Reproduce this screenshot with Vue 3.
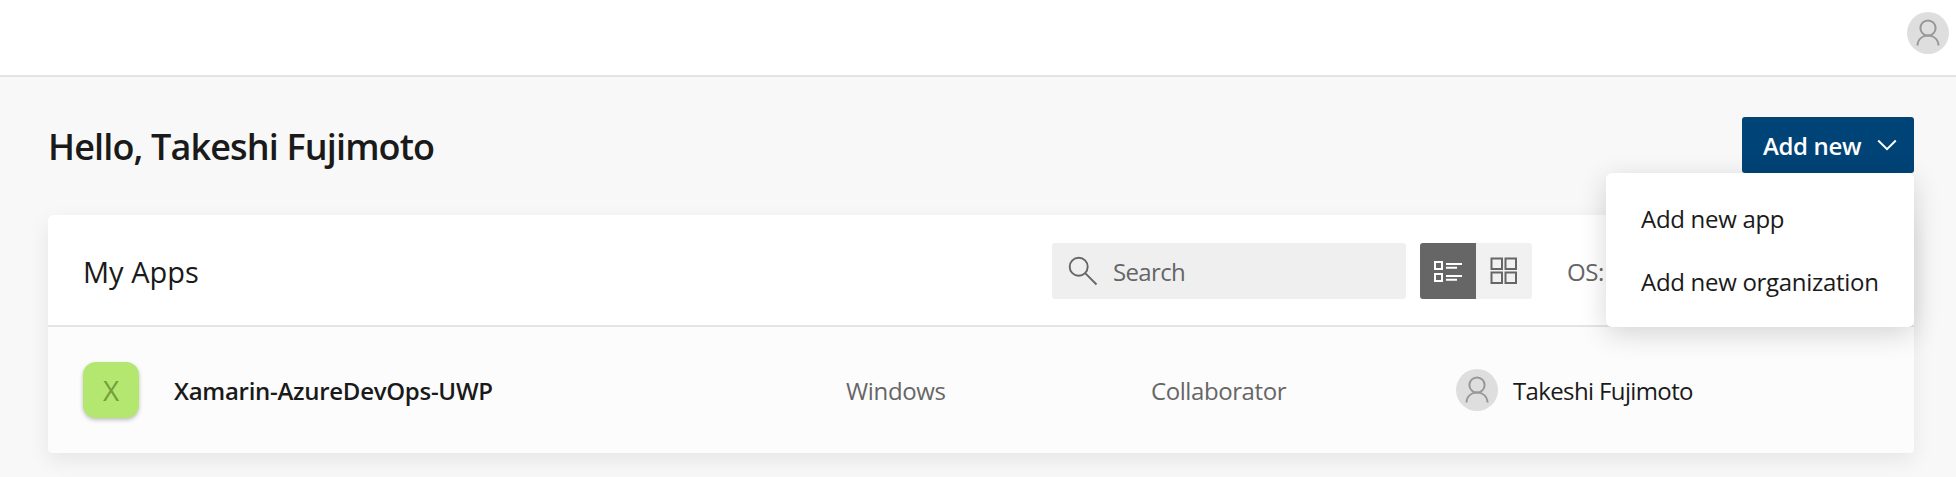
<script setup>
const menuItems = [
  { label: 'Add new app', cls: 'menu-app' },
  { label: 'Add new organization', cls: 'menu-org' },
]
const apps = [
  { initial: 'X', name: 'Xamarin-AzureDevOps-UWP', os: 'Windows', role: 'Collaborator', owner: 'Takeshi Fujimoto' },
]
</script>

<template>
  <div class="page">
    <header class="topbar">
      <span class="avatar">
        <svg viewBox="0 0 42 42"><circle cx="21" cy="16" r="7.6" /><path d="M10.4 33.5c.6-6.4 5-9.900 10.600-9.900s10 3.500 10.600 9.900" /></svg>
      </span>
    </header>

    <main class="content">
      <div class="heading">
        <h1><span class="t hello">Hello, Takeshi Fujimoto</span></h1>
        <div class="add">
          <button class="add-button">
            <span class="t add-label">Add new</span>
            <svg class="chevron" width="20" height="12" viewBox="0 0 20 12"><path d="M1.200 1.500 10 10.200 18.800 1.500" /></svg>
          </button>
          <ul class="menu">
            <li v-for="item in menuItems" :key="item.label"><span class="t" :class="item.cls">{{ item.label }}</span></li>
          </ul>
        </div>
      </div>

      <section class="card">
        <div class="card-head">
          <h2><span class="t my-apps">My Apps</span></h2>
          <div class="search">
            <svg width="30" height="30" viewBox="0 0 30 30"><circle cx="10.700" cy="10.700" r="9" /><path d="M17.200 17.200 28.500 28.500" /></svg>
            <span class="t search-label">Search</span>
          </div>
          <div class="toggle">
            <span class="toggle-item active">
              <svg width="30" height="24" viewBox="0 0 30 24">
                <path d="M2 3h7v7H2zM2 15h7v7H2z" /><path d="M13 5h16M13 8.800h11M13 17h16M13 20.800h11" />
              </svg>
            </span>
            <span class="toggle-item">
              <svg class="grid-icon" width="28" height="28" viewBox="0 0 28 28"><path d="M1.500 1.500h10.500v10.500H1.500zM15.500 1.500h10.500v10.500H15.500zM1.500 15.500h10.500v10.500H1.500zM15.500 15.500h10.500v10.500H15.500z" /></svg>
            </span>
          </div>
          <div class="filter"><span class="t os-label">OS:</span></div>
        </div>

        <div v-for="app in apps" :key="app.name" class="row">
          <span class="app-icon"><span class="t">{{ app.initial }}</span></span>
          <div class="cell"><span class="t app-name">{{ app.name }}</span></div>
          <div class="cell muted"><span class="t os">{{ app.os }}</span></div>
          <div class="cell muted"><span class="t role">{{ app.role }}</span></div>
          <div class="cell owner">
            <span class="avatar">
              <svg viewBox="0 0 42 42"><circle cx="21" cy="16" r="7.6" /><path d="M10.4 33.5c.6-6.4 5-9.900 10.600-9.900s10 3.500 10.600 9.900" /></svg>
            </span>
            <span class="t owner-name">{{ app.owner }}</span>
          </div>
        </div>
      </section>
    </main>
  </div>
</template>

<style>
body { background: #fff; }
</style>

<style scoped>
.page {
  width: 1956px;
  height: 477px;
  overflow: hidden;
  box-sizing: border-box;
  background: #f8f8f8;
  font-family: "Open Sans", "Noto Sans", sans-serif;
  font-size: 24px;
  color: #1a1a1a;
}
.page * { box-sizing: border-box; }
.t { white-space: nowrap; display: inline-block; line-height: 32px; }
svg { fill: none; display: block; }
.topbar {
  height: 77px;
  padding: 12px 7px 0;
  display: flex;
  justify-content: flex-end;
  background: #fff;
  border-bottom: 2px solid #e3e3e3;
}
.avatar {
  width: 42px;
  height: 42px;
  flex: none;
  border-radius: 50%;
  background: #dedede;
}
.avatar svg { stroke: #979797; stroke-width: 2; }
.content { padding: 40px 42px 0 48px; }
.heading { display: flex; justify-content: space-between; height: 98px; }
h1, h2 { margin: 0; font-weight: 400; }
h1 { font-size: 36px; font-weight: 600; padding-top: 5px; }
.hello { letter-spacing: -.86px; }
.add { position: relative; height: 56px; }
.add-button {
  width: 172px;
  height: 56px;
  border: 0;
  border-radius: 3px;
  background: #004377;
  color: #fff;
  font: 600 24px "Open Sans", "Noto Sans", sans-serif;
  display: flex;
  align-items: center;
  justify-content: space-between;
  padding: 0 17px 0 21px;
}
.add-label { letter-spacing: -.35px; padding-top: 1px; }
.chevron { stroke: #fff; stroke-width: 2; }
.menu {
  position: absolute;
  z-index: 2;
  top: 56px;
  right: 0;
  width: 308px;
  height: 154px;
  margin: 0;
  padding: 14px 35px;
  list-style: none;
  background: #fff;
  border-radius: 6px;
  box-shadow: 0 7px 28px rgba(0, 0, 0, .16);
}
.menu li { height: 63px; display: flex; align-items: center; letter-spacing: -.3px; }
.card {
  height: 238px;
  border-radius: 6px 6px 4px 4px;
  background: #fcfcfc;
  box-shadow: 0 7px 21px rgba(0, 0, 0, .08);
}
.card-head {
  height: 112px;
  padding: 0 35px;
  display: flex;
  align-items: center;
  background: #fff;
  border-bottom: 2px solid #e4e4e4;
  border-radius: 6px 6px 0 0;
}
h2 { width: 969px; font-size: 29px; padding-top: 2px; }
.search {
  width: 354px;
  height: 56px;
  margin-top: 2px;
  padding-left: 16px;
  border-radius: 3px;
  background: #efefef;
  color: #666;
  display: flex;
  align-items: center;
  gap: 15px;
}
.search svg { stroke: #666; stroke-width: 1.900; }
.search-label { letter-spacing: -.65px; padding-top: 1px; }
.toggle {
  display: flex;
  margin: 2px 35px 0 14px;
  border-radius: 3px;
  overflow: hidden;
  background: #f1f1f1;
}
.toggle-item {
  width: 56px;
  height: 56px;
  display: flex;
  align-items: center;
  justify-content: center;
}
.toggle-item svg { stroke: #666; stroke-width: 2; }
.toggle-item .grid-icon { margin: 0 1px 1px 0; }
.toggle-item.active { background: #666; }
.toggle-item.active svg { stroke: #fff; }
.filter { color: #666; padding-top: 2px; }
.os-label { letter-spacing: -.4px; }
.row {
  height: 126px;
  padding: 0 35px;
  display: grid;
  grid-template-columns: 91px 672px 305px 305px 1fr;
  align-items: center;
}
.app-icon {
  width: 56px;
  height: 56px;
  border-radius: 13px;
  background: #b4e76f;
  color: #739e3c;
  font-size: 28px;
  display: flex;
  align-items: center;
  justify-content: center;
  box-shadow: 0 2px 4px rgba(0, 0, 0, .25);
}
.muted { color: #666; }
.app-name { font-weight: 600; letter-spacing: -.28px; }
.os { letter-spacing: -.35px; }
.role { letter-spacing: -.42px; }
.owner { display: flex; align-items: center; gap: 15px; }
.owner-name { letter-spacing: -.63px; padding-top: 1px; }
</style>
